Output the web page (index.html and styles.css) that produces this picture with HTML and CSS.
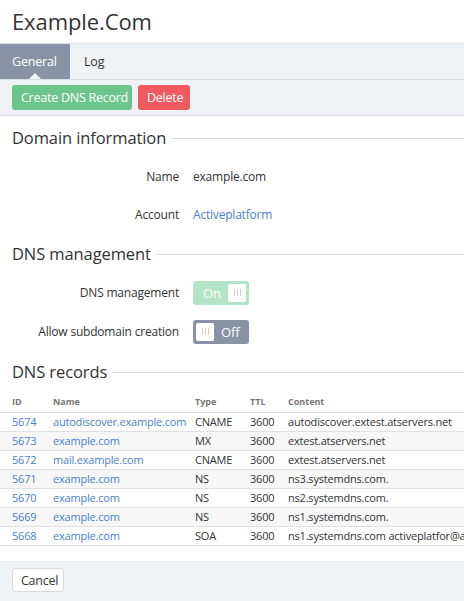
FILE: index.html
```html
<!DOCTYPE html>
<html lang="en">
<head>
    <meta charset="UTF-8">
    <title>Example.Com</title>
    <link rel="stylesheet" href="styles.css">
</head>
<body>
    <div class="page">
        <!-- Header -->
        <div class="page-header">
            <h1 class="page-title">Example.Com</h1>
        </div>

        <!-- Tabs -->
        <div class="tabs">
            <a class="tab tab-active">General</a>
            <a class="tab">Log</a>
        </div>

        <!-- Toolbar -->
        <div class="toolbar">
            <button class="btn btn-green">Create DNS Record</button>
            <button class="btn btn-red">Delete</button>
        </div>

        <div class="content">
            <div class="section-title"><span>Domain information</span></div>
            <div class="field-row">
                <div class="field-label">Name</div>
                <div class="field-value">example.com</div>
            </div>
            <div class="field-row">
                <div class="field-label">Account</div>
                <div class="field-value"><a class="link">Activeplatform</a></div>
            </div>

            <div class="section-title"><span>DNS management</span></div>
            <div class="field-row field-row-toggle">
                <div class="field-label">DNS management</div>
                <div class="field-value">
                    <div class="toggle toggle-on">
                        <span class="toggle-text">On</span>
                        <span class="toggle-knob"><i></i><i></i><i></i></span>
                    </div>
                </div>
            </div>
            <div class="field-row field-row-toggle">
                <div class="field-label">Allow subdomain creation</div>
                <div class="field-value">
                    <div class="toggle toggle-off">
                        <span class="toggle-knob"><i></i><i></i><i></i></span>
                        <span class="toggle-text">Off</span>
                    </div>
                </div>
            </div>

            <div class="section-title"><span>DNS records</span></div>
            <table class="records">
                <thead>
                    <tr>
                        <th class="col-id">ID</th>
                        <th class="col-name">Name</th>
                        <th class="col-type">Type</th>
                        <th class="col-ttl">TTL</th>
                        <th class="col-content">Content</th>
                    </tr>
                </thead>
                <tbody>
                    <tr><td><a class="link">5674</a></td><td><a class="link">autodiscover.example.com</a></td><td>CNAME</td><td>3600</td><td>autodiscover.extest.atservers.net</td></tr>
                    <tr><td><a class="link">5673</a></td><td><a class="link">example.com</a></td><td>MX</td><td>3600</td><td>extest.atservers.net</td></tr>
                    <tr><td><a class="link">5672</a></td><td><a class="link">mail.example.com</a></td><td>CNAME</td><td>3600</td><td>extest.atservers.net</td></tr>
                    <tr><td><a class="link">5671</a></td><td><a class="link">example.com</a></td><td>NS</td><td>3600</td><td>ns3.systemdns.com.</td></tr>
                    <tr><td><a class="link">5670</a></td><td><a class="link">example.com</a></td><td>NS</td><td>3600</td><td>ns2.systemdns.com.</td></tr>
                    <tr><td><a class="link">5669</a></td><td><a class="link">example.com</a></td><td>NS</td><td>3600</td><td>ns1.systemdns.com.</td></tr>
                    <tr><td><a class="link">5668</a></td><td><a class="link">example.com</a></td><td>SOA</td><td>3600</td><td>ns1.systemdns.com activeplatfor@activeplatform.com</td></tr>
                </tbody>
            </table>
        </div>

        <!-- Footer -->
        <div class="footer">
            <button class="btn btn-default">Cancel</button>
        </div>
    </div>
</body>
</html>
```

FILE: styles.css
```css
* {
    margin: 0;
    padding: 0;
    box-sizing: border-box;
}

body {
    font-family: "Open Sans", Arial, sans-serif;
    font-size: 12px;
    color: #333;
    background: #fff;
    width: 464px;
    height: 601px;
    overflow: hidden;
}

.page {
    display: flex;
    flex-direction: column;
    height: 601px;
}

.page-header {
    height: 43px;
    padding: 6px 12px 0;
}

.page-title {
    font-size: 22px;
    font-weight: normal;
    color: #333;
    line-height: 30px;
    letter-spacing: -0.1px;
}

.tabs {
    display: flex;
    height: 37px;
    background: #f0f3f6;
    border-top: 1px solid #d9dce1;
    border-bottom: 1px solid #d9dce1;
}

.tab {
    display: block;
    position: relative;
    padding: 0 14px 0 12px;
    line-height: 35px;
    font-size: 12.5px;
    letter-spacing: -0.2px;
    color: #333;
}

.tab-active {
    background: #8a93a5;
    color: #fff;
    width: 70px;
}

.tab-active + .tab {
    padding-left: 14px;
}

.tab-active::after {
    content: "";
    position: absolute;
    left: 29px;
    bottom: 0;
    border-left: 6px solid transparent;
    border-right: 6px solid transparent;
    border-bottom: 6px solid #f0f3f6;
}

.toolbar {
    display: flex;
    gap: 6px;
    height: 36px;
    padding: 5px 12px 0;
    background: #f0f3f6;
    border-bottom: 1px solid #d9dce1;
}

.btn {
    font-family: "Open Sans", Arial, sans-serif;
    font-size: 12.5px;
    letter-spacing: -0.25px;
    height: 25px;
    padding: 0 8px;
    border: 1px solid transparent;
    border-radius: 3px;
    color: #fff;
    white-space: nowrap;
    cursor: pointer;
}

.btn-green {
    background: #6cc68c;
    width: 120px;
}

.btn-red {
    background: #f05a5f;
    width: 52px;
}

.btn-default {
    background: #fff;
    border-color: #d6d9de;
    color: #333;
    width: 52px;
    height: 24px;
}

.content {
    flex: 1;
    padding-top: 10px;
    overflow: hidden;
}

.section-title {
    display: flex;
    align-items: center;
    gap: 5px;
    padding-left: 12px;
    font-size: 16.5px;
    letter-spacing: -0.1px;
    line-height: 24px;
    color: #333;
    white-space: nowrap;
}

.section-title::after {
    content: "";
    flex: 1;
    height: 1px;
    background: #dcdcdc;
    margin-top: 1px;
}

.field-row {
    display: flex;
    align-items: center;
    height: 38px;
    font-size: 12px;
    letter-spacing: -0.2px;
}

.content > .section-title + .field-row {
    margin-top: 7px;
}

.field-row + .section-title {
    margin-top: 9px;
}

.field-label {
    width: 179px;
    text-align: right;
    color: #333;
}

.field-value {
    padding-left: 14px;
}

.link {
    color: #4a7fc9;
    text-decoration: none;
}

.field-row-toggle {
    height: 39px;
}

.toggle {
    display: flex;
    align-items: center;
    width: 56px;
    height: 24px;
    padding: 3px;
    border-radius: 3px;
    font-size: 13px;
    letter-spacing: 0;
    color: #fff;
}

.toggle-on {
    background: #b2e4c6;
    justify-content: space-between;
    padding-left: 10px;
}

.toggle-off {
    background: #8a93a5;
    gap: 7px;
}

.toggle-knob {
    display: flex;
    justify-content: center;
    align-items: center;
    gap: 2px;
    width: 18px;
    height: 18px;
    background: #fff;
    border-radius: 2px;
}

.toggle-knob i {
    display: block;
    width: 1px;
    height: 7px;
    background: #ccc;
}

.toggle-off .toggle-knob i {
    background: #f2c7ab;
}

.records {
    margin-top: 9px;
    width: 600px;
    table-layout: fixed;
    border-collapse: collapse;
    white-space: nowrap;
    font-size: 11px;
    letter-spacing: -0.2px;
}

.records th {
    text-align: left;
    font-size: 9px;
    font-weight: bold;
    letter-spacing: 0;
    color: #777;
    height: 19px;
    padding: 0 0 2px;
    border-bottom: 1px solid #e0e0e0;
}

.records td {
    height: 19px;
    padding: 0 0 1px;
    border-bottom: 1px solid #e0e0e0;
    color: #333;
    overflow: hidden;
}

.records tr > :first-child {
    padding-left: 12px;
}

.records tbody tr:nth-child(even) {
    background: #f7f7f7;
}

.col-id {
    width: 53px;
}

.col-name {
    width: 142px;
}

.col-type {
    width: 55px;
}

.col-ttl {
    width: 38px;
}

.col-content {
    width: 312px;
}

.footer {
    height: 40px;
    padding: 6px 12px 0;
    background: #f0f3f6;
    border-top: 1px solid #e6e9ed;
}
```
